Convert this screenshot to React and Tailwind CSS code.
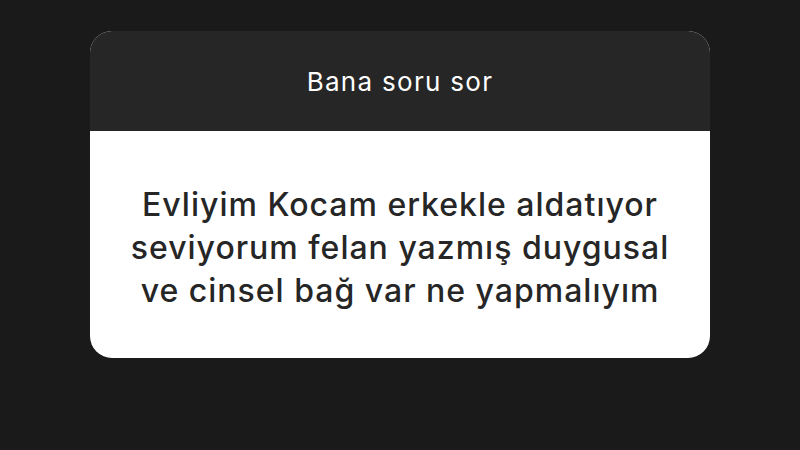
export default function App() {
  return (
    <div className="w-[800px] h-[450px] bg-[#1a1a1a] flex justify-center pt-[31px]" style={{ fontFamily: 'Inter, "Noto Sans", sans-serif' }}>
      <div className="w-[620px] h-[327px] rounded-[22px] overflow-hidden flex flex-col bg-white">
        <div className="h-[100px] bg-[#262626] flex items-center justify-center">
          <span className="text-white text-[26px] tracking-[1.3px]">Bana soru sor</span>
        </div>
        <div className="flex-1 flex items-center justify-center pt-[6px]">
          <p className="text-[#262626] text-[32px] leading-[43px] tracking-[1px] text-center font-medium">
            Evliyim Kocam erkekle aldatıyor<br />
            seviyorum felan yazmış duygusal<br />
            ve cinsel bağ var ne yapmalıyım
          </p>
        </div>
      </div>
    </div>
  );
}
